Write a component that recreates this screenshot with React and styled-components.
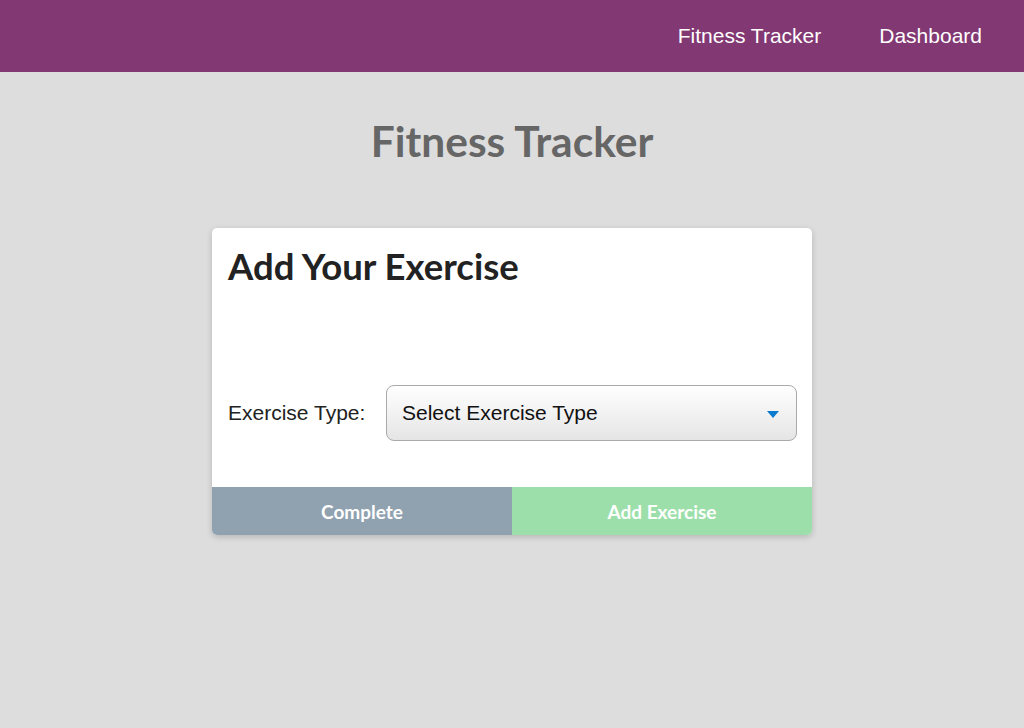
import React from 'react';
import styled, { createGlobalStyle } from 'styled-components';

const GlobalStyle = createGlobalStyle`
  html, body {
    margin: 0;
    padding: 0;
    background: #dddddd;
    font-family: "Liberation Sans", Arial, sans-serif;
  }
`;

const Page = styled.div`
  min-height: 728px;
  background: #dddddd;
`;

const NavBar = styled.nav`
  height: 72px;
  background: #823872;
  display: flex;
  justify-content: flex-end;
  align-items: center;
  gap: 58px;
  padding: 0 42px 2px 0;
  box-sizing: border-box;
`;

const NavLink = styled.a`
  color: #ffffff;
  font-size: 21px;
  text-decoration: none;
  line-height: 1;
`;

const Title = styled.h1`
  margin: 0;
  padding-top: 47px;
  text-align: center;
  font-family: Lato, "Liberation Sans", sans-serif;
  font-weight: 700;
  font-size: 42.5px;
  line-height: 44px;
  color: #666666;
`;

const Card = styled.div`
  width: 600px;
  margin: 65px auto 0;
  background: #ffffff;
  border-radius: 5px;
  box-shadow: 0 2px 6px rgba(0, 0, 0, 0.18);
  overflow: hidden;
`;

const CardBody = styled.div`
  padding: 16px 15px 46px 16px;
`;

const CardTitle = styled.h2`
  margin: 0;
  font-family: Lato, "Liberation Sans", sans-serif;
  font-weight: 700;
  font-size: 36.5px;
  line-height: 44px;
  color: #222222;
`;

const FieldRow = styled.div`
  display: flex;
  align-items: center;
  margin-top: 97px;
`;

const Label = styled.label`
  width: 158px;
  font-size: 21px;
  color: #222222;
`;

const SelectBox = styled.div`
  flex: 1;
  height: 56px;
  box-sizing: border-box;
  border: 1px solid #aaaaaa;
  border-radius: 8px;
  background: linear-gradient(#ffffff, #e5e5e5);
  display: flex;
  align-items: center;
  justify-content: space-between;
  padding: 0 17px 0 15px;
  font-size: 21px;
  color: #111111;
`;

const Arrow = styled.span`
  width: 0;
  height: 0;
  border-left: 6px solid transparent;
  border-right: 6px solid transparent;
  border-top: 7px solid #0b7bd0;
  margin-top: 2px;
`;

const ButtonRow = styled.div`
  display: flex;
`;

const ActionButton = styled.button`
  flex: 1;
  height: 48px;
  border: none;
  margin: 0;
  background: ${(p) => p.$bg};
  color: #ffffff;
  font-family: Lato, "Liberation Sans", sans-serif;
  font-weight: 700;
  font-size: 19px;
  cursor: pointer;
`;

export default function App() {
  return (
    <Page>
      <GlobalStyle />
      <NavBar>
        <NavLink href="#">Fitness Tracker</NavLink>
        <NavLink href="#">Dashboard</NavLink>
      </NavBar>
      <Title>Fitness Tracker</Title>
      <Card>
        <CardBody>
          <CardTitle>Add Your Exercise</CardTitle>
          <FieldRow>
            <Label>Exercise Type:</Label>
            <SelectBox>
              <span>Select Exercise Type</span>
              <Arrow />
            </SelectBox>
          </FieldRow>
        </CardBody>
        <ButtonRow>
          <ActionButton $bg="#90a2b0">Complete</ActionButton>
          <ActionButton $bg="#9ddfaa">Add Exercise</ActionButton>
        </ButtonRow>
      </Card>
    </Page>
  );
}
